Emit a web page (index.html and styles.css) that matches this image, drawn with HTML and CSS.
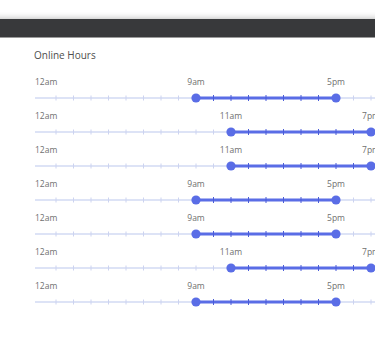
FILE: index.html
```html
<!DOCTYPE html>
<html lang="en">
<head>
    <meta charset="UTF-8">
    <meta name="viewport" content="width=device-width, initial-scale=1.0">
    <title>Online Hours</title>
    <link rel="stylesheet" href="styles.css">
</head>

<body>
    <div class="card">
        <div class="cardBar"></div>
        <div class="cardBody">
            <h2 class="cardTitle">Online Hours</h2>
            <div class="hoursList"></div>
        </div>
    </div>

<script>
 const hours = [[9,17],[11,19],[11,19],[9,17],[9,17],[11,19],[9,17]];
 const step = 17.5;
 const start = 3.5;

 function hourLabel(h){
    if (h === 0) return '12am';
    if (h < 12) return h + 'am';
    if (h === 12) return '12pm';
    return (h - 12) + 'pm';
 }

 function buildRow(from, to){
    const x1 = start + from * step;
    const x2 = start + to * step;
    let ticks = '';
    for (let h = 1; h < 24; h++){
        const x = start + h * step;
        const on = h > from && h < to;
        ticks += `<line x1="${x}" y1="${on ? 3 : 3.5}" x2="${x}" y2="${on ? 9 : 8.5}" class="${on ? 'tickOn' : 'tick'}"/>`;
    }
    return `
        <div class="hourRow">
            <div class="hourLabels">
                <span class="hourLabel first">12am</span>
                <span class="hourLabel" style="left:${x1}px">${hourLabel(from)}</span>
                <span class="hourLabel" style="left:${x2}px">${hourLabel(to)}</span>
            </div>
            <svg class="hourTrack" width="440" height="12">
                <line x1="0" y1="6" x2="440" y2="6" class="trackLine"/>
                <line x1="${x1}" y1="6" x2="${x2}" y2="6" class="trackActive"/>
                ${ticks}
                <circle cx="${x1}" cy="6" r="4.6" class="trackDot"/>
                <circle cx="${x2}" cy="6" r="4.6" class="trackDot"/>
            </svg>
        </div>`;
 }

 const list = document.querySelector('.hoursList');
 hours.forEach(h => list.insertAdjacentHTML('beforeend', buildRow(h[0], h[1])));
</script>
</body>
</html>
```

FILE: styles.css
```css
body{
    margin: 0;
    background: #fff;
    font-family: "Open Sans", Arial, sans-serif;
    overflow: hidden;
}
.card{
    margin-top: 19px;
    margin-left: -10px;
    width: 420px;
    height: 317px;
    background: #fff;
    box-shadow: 0 1px 8px rgba(0, 0, 0, 0.4);
}
.cardBar{
    height: 19px;
    background: #38393b;
    border-bottom: 1px solid #9a9a9a;
    box-sizing: border-box;
}
.cardBody{
    padding: 11px 0 0 45px;
}
.cardTitle{
    margin: 0 0 16px -1px;
    font-size: 10px;
    line-height: 12px;
    font-weight: 500;
    color: #4e4e4e;
}
.hourRow{
    height: 34px;
}
.hourLabels{
    position: relative;
    height: 10px;
    margin-bottom: 5px;
}
.hourLabel{
    position: absolute;
    top: 0;
    transform: translateX(-50%);
    font-size: 8.5px;
    line-height: 10px;
    color: #707070;
    white-space: nowrap;
}
.hourLabel.first{
    left: 0;
    transform: none;
}
.hourTrack{
    display: block;
}
.trackLine{
    stroke: #dde3f6;
    stroke-width: 2;
}
.tick{
    stroke: #ccd3f0;
    stroke-width: 1;
}
.trackActive{
    stroke: #5a6de6;
    stroke-width: 3;
}
.tickOn{
    stroke: #4a5cd8;
    stroke-width: 1;
}
.trackDot{
    fill: #5a6de6;
}
```
